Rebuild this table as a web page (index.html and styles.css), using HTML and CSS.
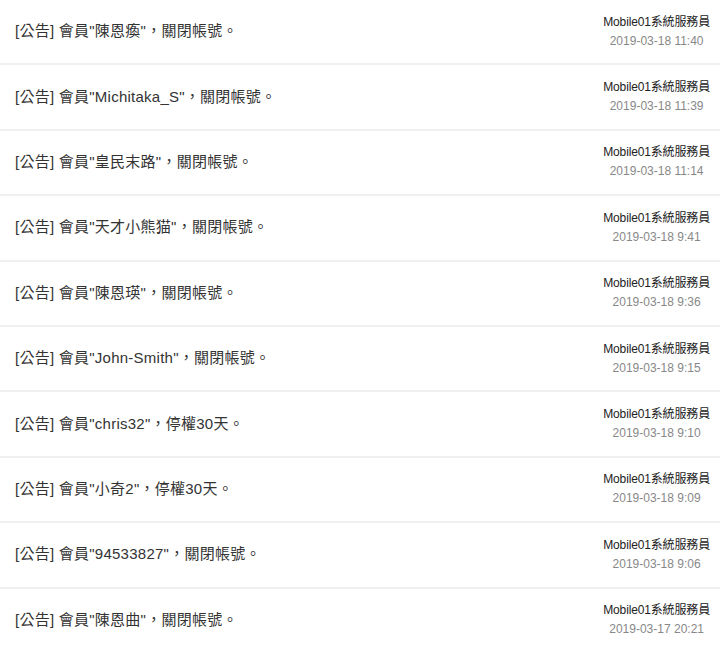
FILE: index.html
```html
<!DOCTYPE html>
<html lang="zh-Hant">
<head>
<meta charset="utf-8">
<link rel="stylesheet" href="styles.css">
</head>
<body>
<ul class="list">
  <li class="row"><span class="title">[公告] 會員"陳恩瘓"，關閉帳號。</span><div class="meta"><div class="author">Mobile01系統服務員</div><div class="date">2019-03-18 11:40</div></div></li>
  <li class="row"><span class="title">[公告] 會員"Michitaka_S"，關閉帳號。</span><div class="meta"><div class="author">Mobile01系統服務員</div><div class="date">2019-03-18 11:39</div></div></li>
  <li class="row"><span class="title">[公告] 會員"皇民末路"，關閉帳號。</span><div class="meta"><div class="author">Mobile01系統服務員</div><div class="date">2019-03-18 11:14</div></div></li>
  <li class="row"><span class="title">[公告] 會員"天才小熊猫"，關閉帳號。</span><div class="meta"><div class="author">Mobile01系統服務員</div><div class="date">2019-03-18 9:41</div></div></li>
  <li class="row"><span class="title">[公告] 會員"陳恩瑛"，關閉帳號。</span><div class="meta"><div class="author">Mobile01系統服務員</div><div class="date">2019-03-18 9:36</div></div></li>
  <li class="row"><span class="title">[公告] 會員"John-Smith"，關閉帳號。</span><div class="meta"><div class="author">Mobile01系統服務員</div><div class="date">2019-03-18 9:15</div></div></li>
  <li class="row"><span class="title">[公告] 會員"chris32"，停權30天。</span><div class="meta"><div class="author">Mobile01系統服務員</div><div class="date">2019-03-18 9:10</div></div></li>
  <li class="row"><span class="title">[公告] 會員"小奇2"，停權30天。</span><div class="meta"><div class="author">Mobile01系統服務員</div><div class="date">2019-03-18 9:09</div></div></li>
  <li class="row"><span class="title">[公告] 會員"94533827"，關閉帳號。</span><div class="meta"><div class="author">Mobile01系統服務員</div><div class="date">2019-03-18 9:06</div></div></li>
  <li class="row"><span class="title">[公告] 會員"陳恩曲"，關閉帳號。</span><div class="meta"><div class="author">Mobile01系統服務員</div><div class="date">2019-03-17 20:21</div></div></li>
</ul>
</body>
</html>
```
FILE: styles.css
```css
html, body {
  margin: 0;
  padding: 0;
  background: #fff;
}
body {
  font-family: "Liberation Sans", "Noto Sans CJK TC", sans-serif;
  color: #333;
  overflow: hidden;
}
.list {
  list-style: none;
  margin: 0;
  padding: 0;
}
.row {
  display: flex;
  align-items: center;
  justify-content: space-between;
  height: 63.4px;
  border-bottom: 2px solid #f0f0f0;
  padding: 0 10px 0 15px;
}
.title {
  font-size: 15px;
  line-height: 20px;
  letter-spacing: 0.25px;
  margin-top: -1px;
}
.meta {
  text-align: center;
  font-size: 12px;
  line-height: 19px;
  letter-spacing: -0.15px;
}
.author {
  color: #222;
}
.date {
  color: #888;
  letter-spacing: 0;
}
```
